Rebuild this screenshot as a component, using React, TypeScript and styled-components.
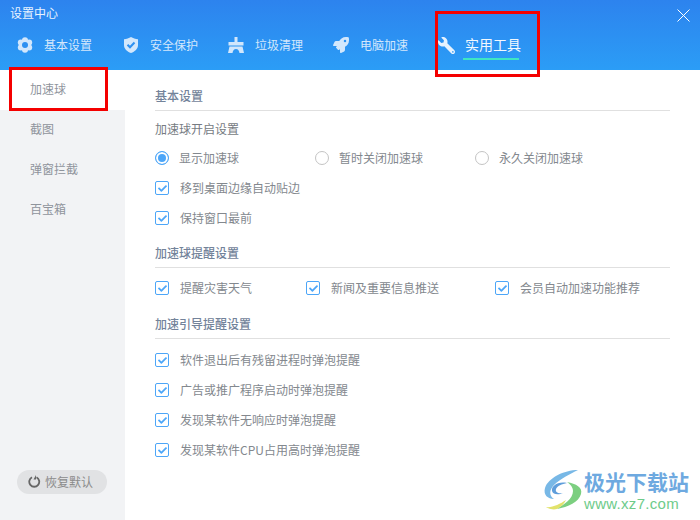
import React from "react";
import styled, { createGlobalStyle } from "styled-components";
import { FaCheck, FaRocket, FaWrench } from "react-icons/fa";

const GlobalStyle = createGlobalStyle`
  html, body { margin: 0; padding: 0; background: #fff; }
  body { font-family: "Noto Sans CJK SC", "Liberation Sans", sans-serif; }
`;

const navItems = [
  { label: "基本设置", icon: "gear", width: 106 },
  { label: "安全保护", icon: "shield", width: 105 },
  { label: "垃圾清理", icon: "broom", width: 105 },
  { label: "电脑加速", icon: "rocket", width: 105 },
];

const iconFill = "#d2e7fc";
const headerBlue = "#2d90f1";

const NavIcon = ({ name }: { name: string }) => {
  if (name === "gear") {
    return (
      <svg width="16" height="16" viewBox="0 0 16 16">
        <g fill={iconFill}>
          <circle cx="8" cy="8" r="6" />
          <circle cx="8" cy="3.200" r="3" />
          <circle cx="8" cy="12.800" r="3" />
          <circle cx="3.800" cy="5.600" r="3" />
          <circle cx="12.200" cy="5.600" r="3" />
          <circle cx="3.800" cy="10.400" r="3" />
          <circle cx="12.200" cy="10.400" r="3" />
        </g>
        <circle cx="8" cy="8" r="3" fill={headerBlue} />
      </svg>
    );
  }
  if (name === "shield") {
    return (
      <svg width="16" height="16" viewBox="0 0 16 16">
        <path
          fill={iconFill}
          d="M8 0c2 1.300 4.500 2 7 2.200V8c0 3.800-3 6.600-7 8-4-1.400-7-4.200-7-8V2.200C3.500 2 6 1.300 8 0Z"
        />
        <path d="M4.500 7.800l2.500 2.500 4.500-4.800" fill="none" stroke={headerBlue} strokeWidth="2" />
      </svg>
    );
  }
  if (name === "broom") {
    return (
      <svg width="16" height="16" viewBox="0 0 16 16">
        <path
          fill={iconFill}
          d="M6.500 0h3v5h6v3.500H.5V5h6V0ZM1.500 9.500h13L16 16h-4.500C11 13.500 10 12 8 12s-3 1.500-3.500 4H0l1.500-6.500Z"
        />
      </svg>
    );
  }
  return <FaRocket size={16} color={iconFill} />;
};

const Check = ({ label }: { label: string }) => (
  <CheckLabel>
    <CheckBox>
      <FaCheck size={9} color="#4da6f8" />
    </CheckBox>
    {label}
  </CheckLabel>
);

const Radio = ({ label, on }: { label: string; on?: boolean }) => (
  <RadioLabel>
    <RadioDot $on={on} />
    {label}
  </RadioLabel>
);

export default function App() {
  return (
    <Window>
      <GlobalStyle />
      <Header>
        <TitleBar>
          <Title>设置中心</Title>
          <CloseIcon width="13" height="13" viewBox="0 0 13 13">
            <path d="M.5.5l12 12M12.500.5l-12 12" stroke="#fff" strokeWidth="1" />
          </CloseIcon>
        </TitleBar>
        <Nav>
          {navItems.map((n) => (
            <NavItem key={n.label} $width={n.width}>
              <NavIconBox>
                <NavIcon name={n.icon} />
              </NavIconBox>
              <NavText>{n.label}</NavText>
            </NavItem>
          ))}
          <ActiveNav>
            <NavIconBox>
              <Wrench size={17} color="#e6f2fe" />
            </NavIconBox>
            <ActiveText>实用工具</ActiveText>
          </ActiveNav>
        </Nav>
      </Header>
      <Body>
        <Sidebar>
          <SideItem $active>加速球</SideItem>
          <SideItem>截图</SideItem>
          <SideItem>弹窗拦截</SideItem>
          <SideItem>百宝箱</SideItem>
          <RestoreButton>
            <svg width="13" height="13" viewBox="0 0 13 13">
              <path
                d="M4 2.300a5 5 0 1 0 4.500 0"
                fill="none"
                stroke="#666"
                strokeWidth="1.800"
              />
              <path d="M8 0v4.500h-2.500z" fill="#666" />
            </svg>
            恢复默认
          </RestoreButton>
        </Sidebar>
        <Content>
          <SectionTitle>基本设置</SectionTitle>
          <SubTitle>加速球开启设置</SubTitle>
          <RadioRow>
            <Radio label="显示加速球" on />
            <Radio label="暂时关闭加速球" />
            <Radio label="永久关闭加速球" />
          </RadioRow>
          <Stack>
            <Check label="移到桌面边缘自动贴边" />
            <Check label="保持窗口最前" />
          </Stack>
          <SectionTitle $gap={17}>加速球提醒设置</SectionTitle>
          <InlineChecks>
            <Check label="提醒灾害天气" />
            <Check label="新闻及重要信息推送" />
            <Check label="会员自动加速功能推荐" />
          </InlineChecks>
          <SectionTitle $gap={18}>加速引导提醒设置</SectionTitle>
          <ReminderList>
            <Check label="软件退出后有残留进程时弹泡提醒" />
            <Check label="广告或推广程序启动时弹泡提醒" />
            <Check label="发现某软件无响应时弹泡提醒" />
            <Check label="发现某软件CPU占用高时弹泡提醒" />
          </ReminderList>
        </Content>
      </Body>
      <RedBoxSide />
      <RedBoxTab />
      <Watermark>
        <svg width="44" height="42" viewBox="0 0 44 42">
          <path
            d="M38 1C24 1 8 9 5 19c-2 7 3 11 9 11-5-3-5-9 0-14C20 10 30 5 38 1Z"
            fill="#78b8e6"
          />
          <path
            d="M27 14c-9-2-16 3-15 8 1 4 7 4 11 2-5 1-8-1-7-4 1-3 6-5 11-6Z"
            fill="#5f9edb"
          />
          <path
            d="M27 13c9 2 16 5 14 12-2 8-13 13-24 15 7-5 16-10 16-18 0-4-3-7-6-9Z"
            fill="#7ccf80"
          />
          <path d="M17 40c-4 1-8 0-11-2 6 1 14-3 20-7-2 4-5 7-9 9Z" fill="#e2e26a" />
        </svg>
        <WatermarkText>
          <WatermarkName>极光下载站</WatermarkName>
          <WatermarkUrl>www.xz7.com</WatermarkUrl>
        </WatermarkText>
      </Watermark>
    </Window>
  );
}

const Window = styled.div`
  position: relative;
  width: 700px;
  height: 520px;
  overflow: hidden;
  background: #fff;
`;

const Header = styled.header`
  height: 70px;
  background: linear-gradient(180deg, #2d83ee 0%, #2b9df6 100%);
  box-sizing: border-box;
`;

const TitleBar = styled.div`
  display: flex;
  justify-content: space-between;
  align-items: center;
  height: 28px;
  padding: 0 10px;
`;

const Title = styled.span`
  font-size: 12px;
  line-height: 26px;
  margin-bottom: 2px;
  color: #e9f3ff;
`;

const CloseIcon = styled.svg`
  display: block;
  margin-top: 3px;
`;

const Nav = styled.nav`
  display: flex;
  align-items: center;
  padding-left: 16px;
  height: 34px;
`;

const NavItem = styled.div<{ $width: number }>`
  display: flex;
  align-items: center;
  width: ${(p) => p.$width}px;
`;

const NavIconBox = styled.span`
  display: flex;
  justify-content: center;
  width: 18px;
  margin-right: 10px;
`;

const NavText = styled.span`
  font-size: 12px;
  line-height: 16px;
  margin-bottom: 1px;
  color: #d3e7fc;
`;

const Wrench = styled(FaWrench)`
  transform: scaleX(-1);
`;

const ActiveNav = styled.div`
  display: flex;
  align-items: center;
`;

const ActiveText = styled.span`
  position: relative;
  font-size: 14px;
  line-height: 20px;
  margin-bottom: 2px;
  color: #f2f8ff;

  &::after {
    content: "";
    position: absolute;
    left: -2px;
    right: 2px;
    bottom: -6px;
    height: 2px;
    background: #3ee6c4;
  }
`;

const Body = styled.div`
  display: flex;
  height: 450px;
`;

const Sidebar = styled.aside`
  display: flex;
  flex-direction: column;
  width: 125px;
  background: #f2f3f5;
`;

const SideItem = styled.div<{ $active?: boolean }>`
  height: 40px;
  line-height: 38px;
  padding-left: 30px;
  font-size: 12px;
  color: #8f949c;
  background: ${(p) => (p.$active ? "#fff" : "transparent")};
`;

const RestoreButton = styled.button`
  display: flex;
  align-items: center;
  gap: 4px;
  width: 90px;
  height: 24px;
  margin: auto 0 26px 17px;
  padding: 0 0 2px 11px;
  border: 0;
  border-radius: 12px;
  background: #e1e2e4;
  color: #8b8b8b;
  font: inherit;
  font-size: 12px;
`;

const Content = styled.main`
  flex: 1;
  padding: 17px 30px 0 30px;
`;

const SectionTitle = styled.h2<{ $gap?: number }>`
  margin: ${(p) => p.$gap ?? 0}px 0 0;
  padding-bottom: 5px;
  height: 18px;
  line-height: 18px;
  font-size: 12px;
  font-weight: 500;
  color: #73839a;
  border-bottom: 1px solid #e0e0e0;
`;

const SubTitle = styled.div`
  margin-top: 9px;
  font-size: 12px;
  line-height: 18px;
  color: #767b82;
`;

const RadioRow = styled.div`
  display: grid;
  grid-template-columns: 160px 160px auto;
  margin-top: 11px;
`;

const RadioLabel = styled.label`
  display: flex;
  align-items: flex-start;
  gap: 10px;
  height: 18px;
  line-height: 17px;
  font-size: 12px;
  color: #83888e;
`;

const RadioDot = styled.span<{ $on?: boolean }>`
  box-sizing: border-box;
  flex: none;
  width: 14px;
  height: 14px;
  margin-top: 2px;
  border-radius: 50%;
  border: 1px solid ${(p) => (p.$on ? "#4da6f8" : "#c4c4c4")};
  background: ${(p) => (p.$on ? "#4da6f8" : "#fff")};
  box-shadow: ${(p) => (p.$on ? "inset 0 0 0 2px #fff" : "none")};
`;

const Stack = styled.div`
  display: flex;
  flex-direction: column;
  gap: 12px;
  margin-top: 12px;
`;

const CheckLabel = styled.label`
  display: flex;
  align-items: flex-start;
  gap: 11px;
  height: 18px;
  line-height: 17px;
  font-size: 12px;
  color: #83888e;
`;

const CheckBox = styled.span`
  display: flex;
  align-items: center;
  justify-content: center;
  box-sizing: border-box;
  flex: none;
  width: 14px;
  height: 14px;
  margin-top: 2px;
  border: 1px solid #4da6f8;
  border-radius: 2px;
`;

const InlineChecks = styled.div`
  display: grid;
  grid-template-columns: 151px 189px auto;
  margin-top: 11px;
`;

const ReminderList = styled.div`
  display: flex;
  flex-direction: column;
  gap: 12px;
  margin-top: 12px;
`;

const RedBoxSide = styled.div`
  position: absolute;
  left: 9px;
  top: 67px;
  width: 99px;
  height: 44px;
  box-sizing: border-box;
  border: 3px solid #f40000;
`;

const RedBoxTab = styled.div`
  position: absolute;
  left: 435px;
  top: 11px;
  width: 105px;
  height: 66px;
  box-sizing: border-box;
  border: 3px solid #f40000;
`;

const Watermark = styled.div`
  position: absolute;
  left: 540px;
  top: 469px;
  display: flex;
  align-items: flex-start;
`;

const WatermarkText = styled.div`
  display: flex;
  flex-direction: column;
  margin-top: 2px;
`;

const WatermarkName = styled.span`
  font-family: "Liberation Sans", "Noto Sans CJK SC", sans-serif;
  font-size: 21px;
  line-height: 24px;
  font-weight: 700;
  color: #6ea9e0;
`;

const WatermarkUrl = styled.span`
  font-family: "Liberation Sans", sans-serif;
  font-size: 15px;
  line-height: 18px;
  letter-spacing: 0.3px;
  color: #6ecb8a;
`;
